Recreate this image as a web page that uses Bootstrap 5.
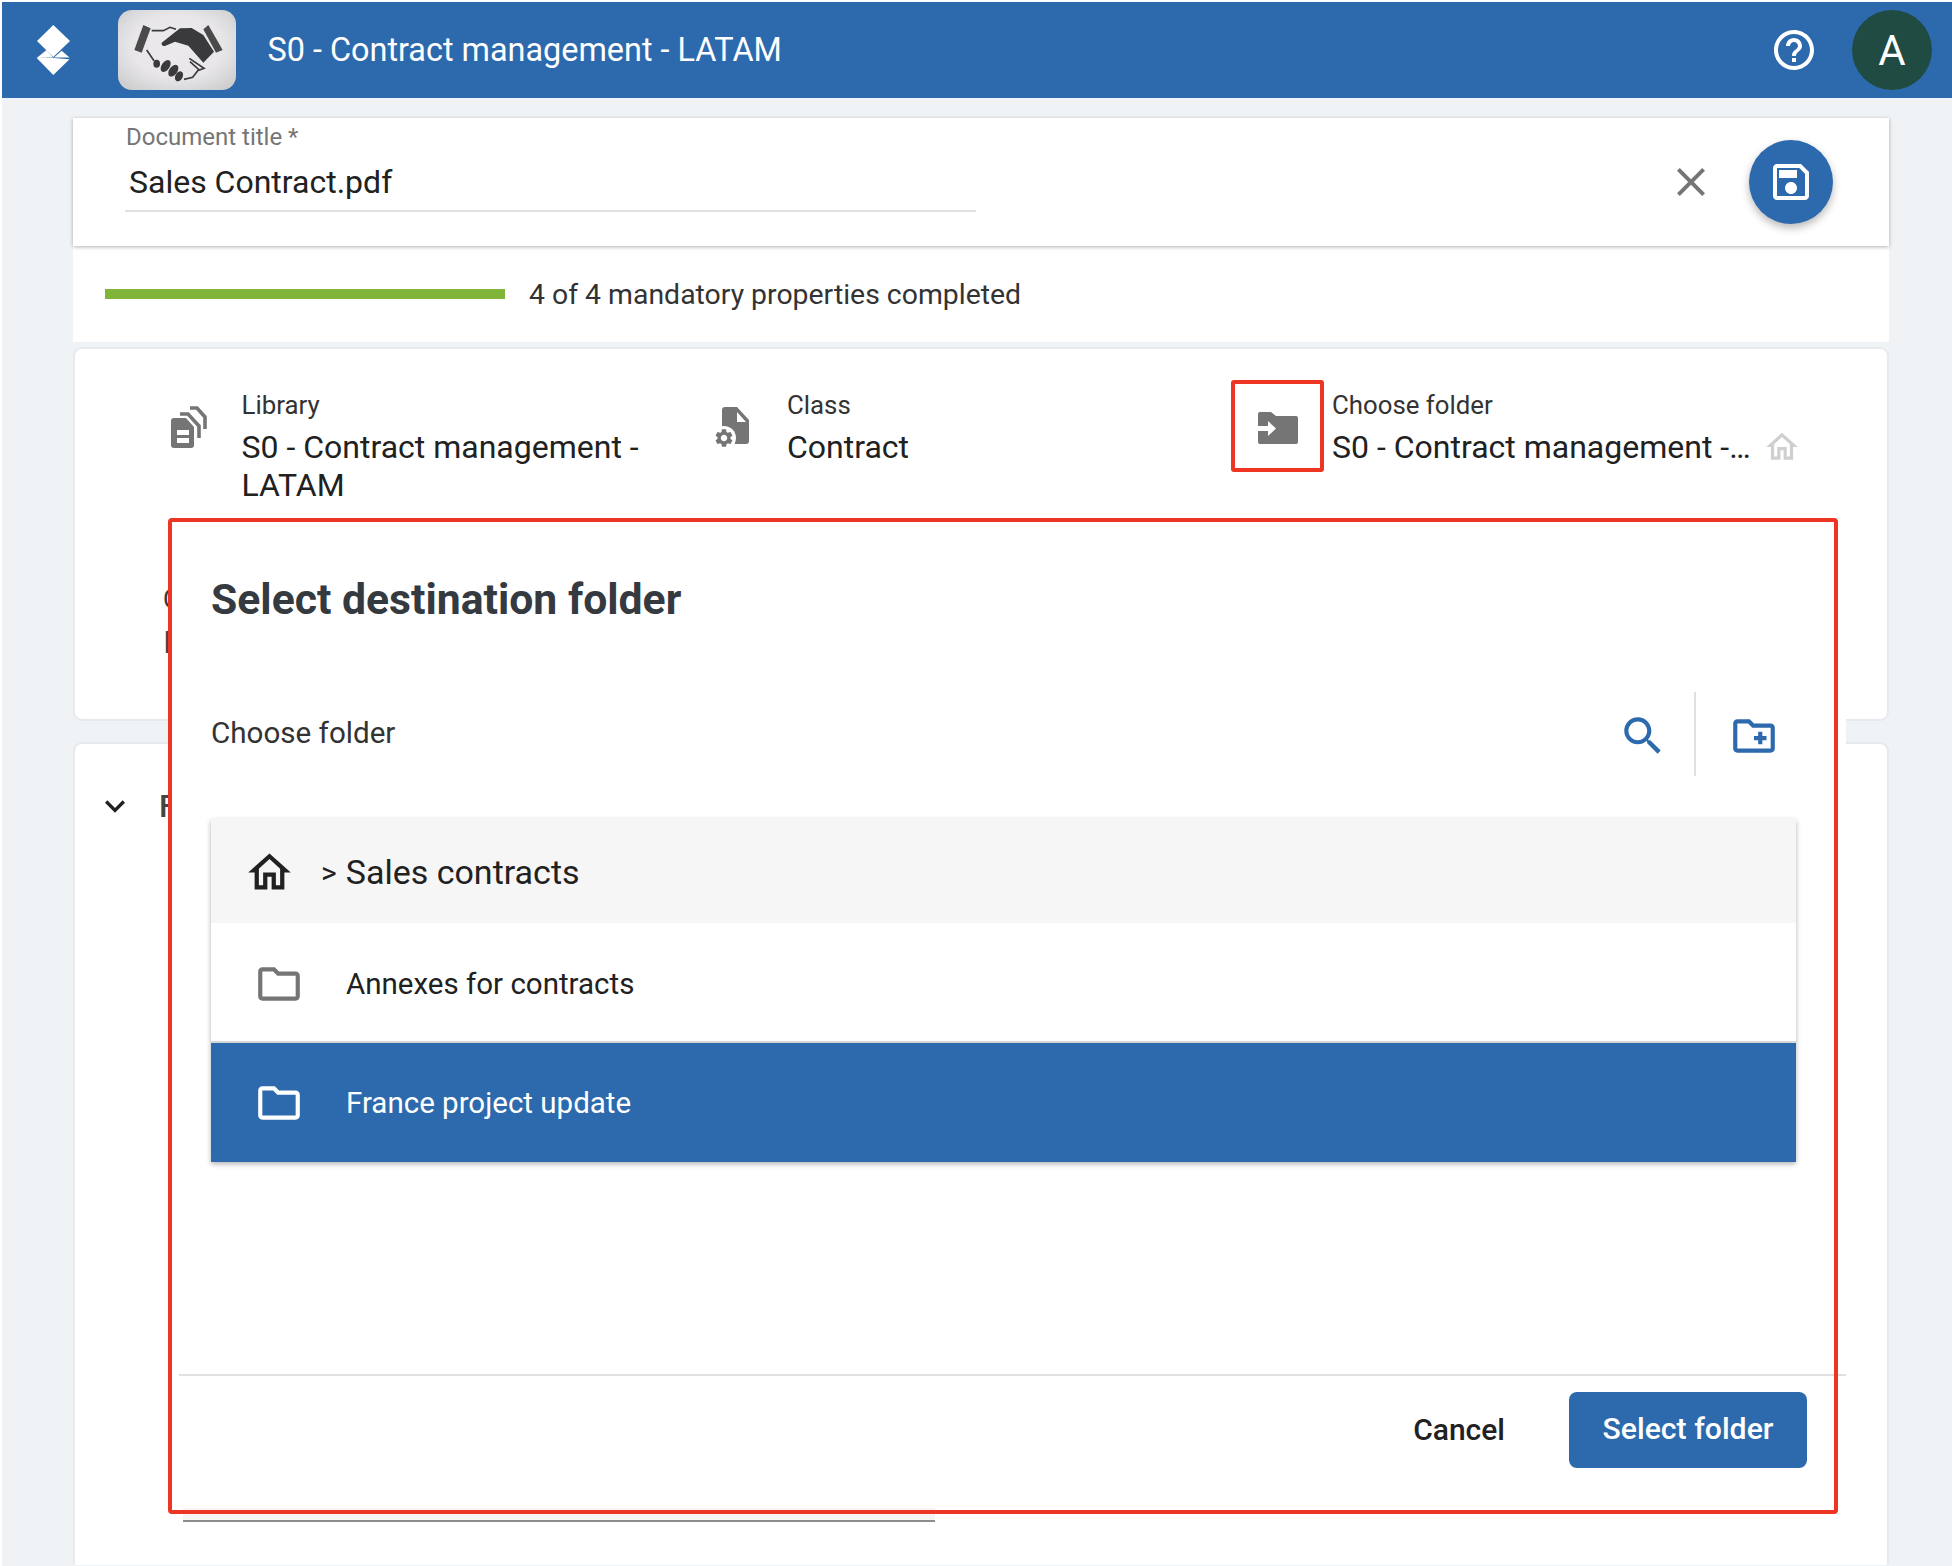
<!DOCTYPE html>
<html lang="en">
<head>
<meta charset="utf-8">
<title>Select destination folder</title>
<link rel="stylesheet" href="https://cdn.jsdelivr.net/npm/bootstrap@5.3.0/dist/css/bootstrap.min.css">
<style>
html,body{height:100%;}
body{margin:0;background:#fff;font-family:Roboto,"Liberation Sans",sans-serif;color:#212121;overflow:hidden;}
.app-shell{position:relative;height:1566px;padding:2px 0 0 2px;}
.app-canvas{background:#eff3f6;height:1564px;}
.top-band{background:#2d6aad;height:96px;padding:0;flex-wrap:nowrap;}
.brand-mark{display:block;margin-left:33px;}
.app-tile{display:block;margin-left:47px;border-radius:14px;}
.band-title{margin-left:31.5px;font-size:32.4px;line-height:40px;color:#fff;}
.band-help{display:block;margin-right:34px;}
.band-avatar{width:80px;height:80px;border-radius:50%;background:#1f4b43;color:#fff;font-size:42px;font-weight:400;margin-right:20px;}
.work-area{padding:20px 63px 0 71px;}
.title-panel{background:#fff;height:128px;padding-left:52px;padding-right:56px;box-shadow:0 1px 4px rgba(0,0,0,.3);position:relative;}
.title-field{width:851px;height:92px;}
.title-label{font-size:24px;line-height:24px;color:#757575;padding-top:7px;box-sizing:content-box;margin-left:1px;}
.title-value{font-size:32px;line-height:40px;padding:13px 0 7px 4px;border-bottom:2px solid #e0e0e0;color:#212121;height:63px;}
.round-save{width:84px;height:84px;border-radius:50%;background:#2d6aad;margin-left:34px;box-shadow:0 4px 9px rgba(0,0,0,.28);border:0;padding:0;}
.progress-strip{background:#fff;height:96px;padding-left:32px;}
.progress-fill{width:400px;height:10px;background:#80b53a;}
.progress-text{margin-left:24px;font-size:28.4px;line-height:36px;color:#333;margin-top:1px;}
.prop-panel{background:#fff;border:2px solid #e6eaee;border-radius:9px;margin:5px 0 0 0;height:374px;padding:41px 0 0 88px;}
.prop-grid{display:grid;grid-template-columns:543px 525px 1fr;}
.prop-icon-col{width:78.5px;flex:none;padding:0 0 0 8px;}
.class-col{width:81px;}
.prop-icon-col svg{display:block;margin-top:16px;}
.prop-label{font-size:25.8px;line-height:30px;color:#333;}
.prop-value{font-size:32px;line-height:38px;color:#212121;margin-top:8px;}
.mark-box{width:93px;height:92px;border:4px solid #ee3524;border-radius:3px;margin:-10px 8px 0 0;flex:none;padding-top:3px;}
.mark-box svg{display:block;}
.home-dim{display:block;margin-left:12px;}
.peek-label{font-size:25.8px;line-height:30px;color:#343a40;margin-top:80px;}
.peek-value{font-size:32px;line-height:38px;color:#444;margin-top:9px;}
.section-panel{background:#fff;border:2px solid #e6eaee;border-bottom:0;border-radius:9px 9px 0 0;margin:21px 0 0 0;height:823px;padding:42px 0 0 20px;}
.section-name{font-size:32px;line-height:40px;color:#444;font-weight:500;margin-left:24px;}
.peek-field{width:752px;height:14px;background:#f5f5f5;border-bottom:2px solid #8c8c8c;margin:682px 0 0 88px;}
.folder-dialog{position:absolute;left:170px;top:520px;width:1676px;height:988px;border:0;border-radius:0;background:#fff;}
.dialog-head{padding:58px 0 0 41px;height:172px;}
.dialog-heading{font-size:42.7px;line-height:42px;font-weight:700;color:#343a40;margin:0;}
.dialog-body{padding:0 50px 0 41px;}
.choose-row{height:84px;padding-right:17px;}
.choose-label{font-size:29.6px;line-height:36px;color:#333;margin-top:-2px;}
.tool-icon{display:block;margin-top:3px;}
.tool-sep{width:2px;height:84px;background:#e0e0e0;margin:0 33px 0 26px;}
.folder-list{margin-top:43px;border-radius:0;box-shadow:0 2px 5px rgba(0,0,0,.3);}
.folder-list .list-group-item{border:0;border-radius:0;padding:0;display:flex;align-items:center;color:#212121;background:#fff;}
.folder-list .crumb-row{height:104px;background:#f6f6f6;font-size:34px;padding-left:33px;padding-top:2px;}
.crumb-sep{font-size:30px;margin:0 9px 0 26px;}
.folder-list .folder-row{font-size:29.5px;padding-left:43px;}
.folder-list .plain-row{height:120px;border-bottom:2px solid #d5d7d9;padding-top:4px;}
.folder-list .picked-row{height:119px;background:#2d6aad;color:#fff;padding-top:1px;}
.folder-name{margin-left:42px;}
.dialog-foot{margin:212px 0 0 9px;border-top:2px solid #e0e0e0;padding:16px 39px 0 0;}
.ghost-action{font-size:30px;font-weight:500;color:#212121;background:none;border:0;padding:0 0 2px 0;margin-right:64px;}
.main-action{width:238px;height:76px;font-size:30.2px;font-weight:500;background:#2d6aad;border:0;border-radius:8px;color:#fff;padding:0 0 2px 0;}
.red-outline{position:absolute;left:168px;top:518px;width:1670px;height:996px;border:4px solid #ee3524;border-radius:4px;pointer-events:none;}
</style>
</head>
<body>
<div class="app-shell">
  <div class="app-canvas">
    <nav class="navbar top-band d-flex align-items-center">
      <div class="d-flex align-items-center">
        <svg class="brand-mark" width="36" height="54" viewBox="35 23 36 54"><polygon fill="#fff" points="53.3,25 70,41 53.3,57 37,41"/><polygon fill="#fff" points="36.7,58 46.5,50 53.3,57.6 37,58"/><polygon fill="#fff" points="54,57.6 61.7,50.7 69.5,57.6"/><polygon fill="#fff" points="36.7,58 53.3,58 69.5,59.3 53.3,75"/></svg>
        <svg class="app-tile" width="118" height="80" viewBox="354 30 354 240">
          <defs><radialGradient id="tilebg" cx="50%" cy="45%" r="65%"><stop offset="0" stop-color="#eceaed"/><stop offset=".6" stop-color="#e8e6e9"/><stop offset="1" stop-color="#cfcfd0"/></radialGradient></defs>
          <rect x="354" y="30" width="354" height="240" fill="url(#tilebg)"/>
          <polygon fill="#4a4a4a" points="430,75 452,85 425,158 403,150"/>
          <polygon fill="#4a4a4a" points="625,75 668,150 648,158 610,88"/>
          <path fill="#3a3a3c" d="M485,128 L540,85 L575,84 L610,105 L642,155 L610,188 L565,137 L525,125 L495,138 Q483,138 485,128Z"/>
          <path fill="none" stroke="#3a3a3c" stroke-width="5" d="M455,92 L490,92 L510,82 L528,88 M440,150 L462,182 M568,175 L612,205 L598,210 L570,185 M595,210 L578,232 L552,238"/>
          <ellipse cx="470" cy="191" rx="10" ry="12" fill="#3a3a3c"/>
          <ellipse cx="497" cy="198" rx="12" ry="20" transform="rotate(35 497 198)" fill="#3a3a3c"/>
          <ellipse cx="520" cy="212" rx="12" ry="20" transform="rotate(35 520 212)" fill="#3a3a3c"/>
          <ellipse cx="537" cy="229" rx="11" ry="16" transform="rotate(30 537 229)" fill="#3a3a3c"/>
        </svg>
        <div class="band-title">S0 - Contract management - LATAM</div>
      </div>
      <div class="d-flex align-items-center">
        <svg class="band-help" width="48" height="48" viewBox="0 0 24 24" fill="#fff"><path d="M11 18h2v-2h-2v2zm1-16C6.48 2 2 6.48 2 12s4.48 10 10 10 10-4.48 10-10S17.52 2 12 2zm0 18c-4.41 0-8-3.59-8-8s3.59-8 8-8 8 3.59 8 8-3.59 8-8 8zm0-14c-2.21 0-4 1.79-4 4h2c0-1.1.9-2 2-2s2 .9 2 2c0 2-3 1.75-3 5h2c0-2.25 3-2.5 3-5 0-2.21-1.79-4-4-4z"/></svg>
        <div class="band-avatar d-flex align-items-center justify-content-center">A</div>
      </div>
    </nav>
    <div class="work-area">
      <div class="title-panel d-flex justify-content-between align-items-center">
        <div class="title-field align-self-start">
          <div class="title-label">Document title *</div>
          <div class="title-value">Sales Contract.pdf</div>
        </div>
        <div class="d-flex align-items-center">
          <svg width="48" height="48" viewBox="0 0 24 24" fill="#757575"><path d="M19 6.41 17.59 5 12 10.59 6.41 5 5 6.41 10.59 12 5 17.59 6.41 19 12 13.41 17.59 19 19 17.59 13.41 12z"/></svg>
          <button class="round-save d-flex align-items-center justify-content-center" type="button" aria-label="Save">
            <svg width="48" height="48" viewBox="0 0 24 24" fill="#fff"><path d="M17 3H5c-1.11 0-2 .9-2 2v14c0 1.1.89 2 2 2h14c1.1 0 2-.9 2-2V7l-4-4zm2 16H5V5h11.17L19 7.83V19zm-7-7c-1.66 0-3 1.34-3 3s1.34 3 3 3 3-1.34 3-3-1.34-3-3-3zM6 6h9v4H6z"/></svg>
          </button>
        </div>
      </div>
      <div class="progress-strip d-flex align-items-center">
        <div class="progress-fill"></div>
        <div class="progress-text">4 of 4 mandatory properties completed</div>
      </div>
      <div class="prop-panel">
        <div class="prop-grid">
          <div class="d-flex">
            <div class="prop-icon-col">
              <svg width="36" height="42" viewBox="171 406 36 42"><path fill="#757575" d="M174,418 H186 L194,427 V445 Q194,448 191,448 H174 Q171,448 171,445 V421 Q171,418 174,418Z"/><rect x="177" y="430" width="12" height="5" fill="#fff"/><rect x="177" y="438" width="12" height="5" fill="#fff"/><path fill="none" stroke="#757575" stroke-width="3.6" d="M180,414 H188 L199,426 V438"/><path fill="none" stroke="#757575" stroke-width="3.6" d="M190,408 H197 L205,417 V429"/></svg>
            </div>
            <div class="flex-grow-1">
              <div class="prop-label">Library</div>
              <div class="prop-value">S0 - Contract management - LATAM</div>
            </div>
          </div>
          <div class="d-flex">
            <div class="prop-icon-col class-col">
              <svg width="36" height="42" viewBox="714 406 36 42"><path fill="#757575" d="M725,407 H737 L749,420 V441 Q749,444 746,444 H725 Q722,444 722,441 V410 Q722,407 725,407Z"/><polygon fill="#fff" points="737,412 737,422 746,422"/><circle cx="724" cy="438" r="12" fill="#fff"/><g transform="translate(713.2 427.2) scale(.9)"><path fill="#757575" d="M19.14 12.94c.04-.3.06-.61.06-.94 0-.32-.02-.64-.07-.94l2.03-1.58c.18-.14.23-.41.12-.61l-1.92-3.32c-.12-.22-.37-.29-.59-.22l-2.39.96c-.5-.38-1.03-.7-1.62-.94l-.36-2.54c-.04-.24-.24-.41-.48-.41h-3.84c-.24 0-.43.17-.47.41l-.36 2.54c-.59.24-1.13.57-1.62.94l-2.39-.96c-.22-.08-.47 0-.59.22L2.74 8.87c-.12.21-.08.47.12.61l2.03 1.58c-.05.3-.09.63-.09.94s.02.64.07.94l-2.03 1.58c-.18.14-.23.41-.12.61l1.92 3.32c.12.22.37.29.59.22l2.39-.96c.5.38 1.03.7 1.62.94l.36 2.54c.05.24.24.41.48.41h3.84c.24 0 .44-.17.47-.41l.36-2.54c.59-.24 1.13-.56 1.62-.94l2.39.96c.22.08.47 0 .59-.22l1.92-3.32c.12-.22.07-.47-.12-.61l-2.01-1.58zM12 15.6c-1.98 0-3.6-1.62-3.6-3.6s1.62-3.6 3.6-3.6 3.6 1.62 3.6 3.6-1.62 3.6-3.6 3.6z"/></g></svg>
            </div>
            <div class="flex-grow-1">
              <div class="prop-label">Class</div>
              <div class="prop-value">Contract</div>
            </div>
          </div>
          <div class="d-flex">
            <div class="mark-box d-flex align-items-center justify-content-center">
              <svg width="44" height="36" viewBox="1256 410 44 36"><path fill="#757575" d="M1260,412 H1271 L1276,416 H1296 Q1298,416 1298,418 V442 Q1298,444 1296,444 H1260 Q1258,444 1258,442 V414 Q1258,412 1260,412Z"/><rect x="1256" y="426" width="13" height="5" fill="#fff"/><polygon fill="#fff" points="1268,421 1276,428.5 1268,436"/></svg>
            </div>
            <div>
              <div class="prop-label">Choose folder</div>
              <div class="prop-value d-flex align-items-center">S0 - Contract management -…<svg class="home-dim" width="38" height="38" viewBox="0 0 24 24" fill="#cfcfcf"><path d="M12 5.69l5 4.5V18h-2v-6H9v6H7v-7.81l5-4.5M12 3 2 12h3v8h6v-6h2v6h6v-8h3L12 3z"/></svg></div>
            </div>
          </div>
        </div>
        <div class="peek-label">C</div>
        <div class="peek-value">I</div>
      </div>
      <div class="section-panel">
        <div class="d-flex align-items-center">
          <svg width="40" height="40" viewBox="0 0 24 24" fill="#212121"><path d="M7.41 8.59 12 13.17l4.59-4.58L18 10l-6 6-6-6z"/></svg>
          <div class="section-name">F</div>
        </div>
        <div class="peek-field"></div>
      </div>
    </div>
  </div>

  <div class="folder-dialog modal-content" role="dialog" aria-label="Select destination folder">
    <div class="dialog-head"><h5 class="dialog-heading">Select destination folder</h5></div>
    <div class="dialog-body">
      <div class="choose-row d-flex align-items-center">
        <div class="choose-label flex-grow-1">Choose folder</div>
        <svg class="tool-icon" width="50" height="50" viewBox="0 0 24 24" fill="#2d6aad"><path d="M15.5 14h-.79l-.28-.27C15.41 12.59 16 11.11 16 9.5 16 5.91 13.09 3 9.5 3S3 5.91 3 9.5 5.91 16 9.5 16c1.61 0 3.09-.59 4.23-1.57l.27.28v.79l5 4.99L20.49 19l-4.99-5zm-6 0C7.01 14 5 11.99 5 9.5S7.01 5 9.5 5 14 7.01 14 9.5 11.99 14 9.5 14z"/></svg>
        <div class="tool-sep"></div>
        <svg class="tool-icon" width="50" height="50" viewBox="0 0 24 24" fill="#2d6aad"><path d="M20 6h-8l-2-2H4c-1.11 0-1.99.89-1.99 2L2 18c0 1.11.89 2 2 2h16c1.11 0 2-.89 2-2V8c0-1.11-.89-2-2-2zm0 12H4V6h5.17l2 2H20v10zm-8-4h2v2h2v-2h2v-2h-2v-2h-2v2h-2z"/></svg>
      </div>
      <div class="list-group folder-list">
        <div class="list-group-item crumb-row">
          <svg width="51" height="51" viewBox="0 0 24 24" fill="#212121"><path d="M12 5.69l5 4.5V18h-2v-6H9v6H7v-7.81l5-4.5M12 3 2 12h3v8h6v-6h2v6h6v-8h3L12 3z"/></svg>
          <span class="crumb-sep">&gt;</span><span>Sales contracts</span>
        </div>
        <div class="list-group-item folder-row plain-row">
          <svg width="50" height="50" viewBox="0 0 24 24" fill="#757575"><path d="M9.17 6l2 2H20v10H4V6h5.17M10 4H4c-1.1 0-1.99.9-1.99 2L2 18c0 1.1.9 2 2 2h16c1.1 0 2-.9 2-2V8c0-1.1-.9-2-2-2h-8l-2-2z"/></svg>
          <span class="folder-name">Annexes for contracts</span>
        </div>
        <div class="list-group-item folder-row picked-row">
          <svg width="50" height="50" viewBox="0 0 24 24" fill="#fff"><path d="M9.17 6l2 2H20v10H4V6h5.17M10 4H4c-1.1 0-1.99.9-1.99 2L2 18c0 1.1.9 2 2 2h16c1.1 0 2-.9 2-2V8c0-1.1-.9-2-2-2h-8l-2-2z"/></svg>
          <span class="folder-name">France project update</span>
        </div>
      </div>
    </div>
    <div class="dialog-foot d-flex justify-content-end align-items-center">
      <button class="ghost-action" type="button">Cancel</button>
      <button class="btn main-action" type="button">Select folder</button>
    </div>
  </div>
  <div class="red-outline"></div>
</div>
<script src="https://cdn.jsdelivr.net/npm/bootstrap@5.3.0/dist/js/bootstrap.bundle.min.js"></script>
</body>
</html>
